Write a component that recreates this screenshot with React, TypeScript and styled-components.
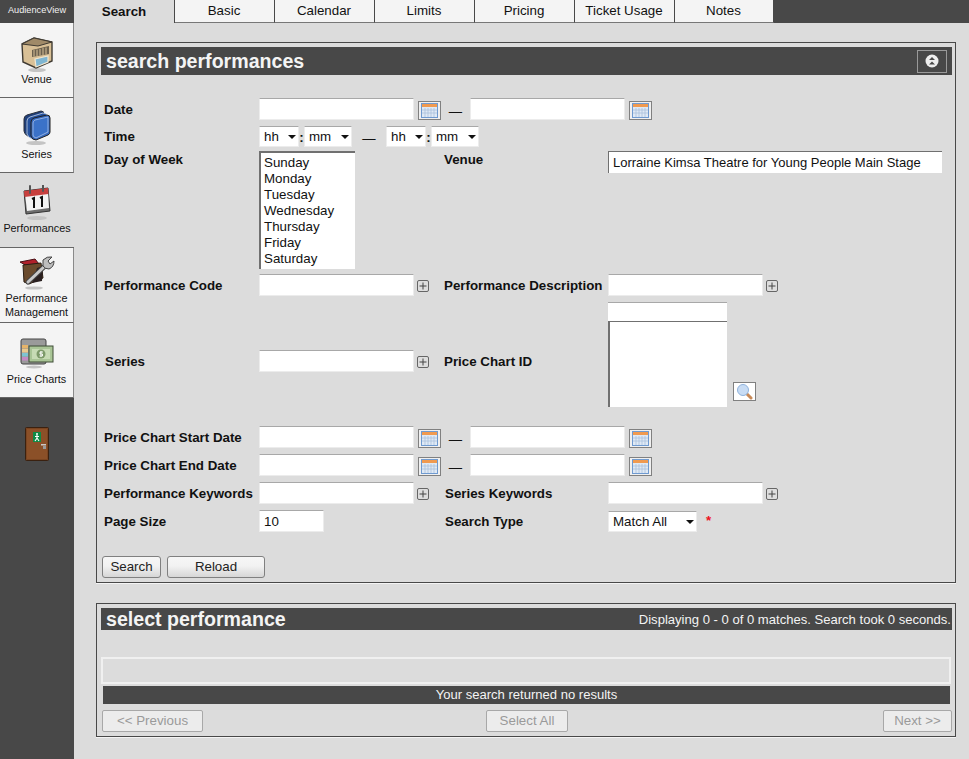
import styled, { createGlobalStyle } from "styled-components";

const GlobalStyle = createGlobalStyle`
  html, body {
    margin: 0;
    padding: 0;
    height: 100%;
    overflow: hidden;
    background: #dcdcdc;
  }
  * { box-sizing: border-box; }
  body, input, select, button {
    font-family: "Liberation Sans", Arial, sans-serif;
    font-size: 13.33px;
    color: #111;
  }
`;

const VenueIcon = () => (
  <svg width="32" height="36" viewBox="0 0 32 36">
    <ellipse cx="16" cy="33" rx="9" ry="2" fill="#c4c4c4" />
    <path d="M1 7 L13 1 L31 5 L31 24 L15 31 L2 25 Z" fill="#d9c096" stroke="#3f3a32" strokeWidth="1.4" />
    <path d="M1 7 L13 1 L31 5 L17 9 Z" fill="#a08a68" stroke="#3f3a32" strokeWidth="1" />
    <path d="M11 13 L28 9 L28 17 L11 20 Z" fill="#6b604e" />
    <path d="M13 13 V19.5 M16 12.5 V19 M19 12 V18.5 M22 11 V18 M25 10.5 V17.5" stroke="#d9c096" strokeWidth="1" />
    <path d="M14 22 L27 19 L27 25 L15 30 Z" fill="#7fb6d2" stroke="#f1e6d0" strokeWidth="1.2" />
  </svg>
);

const SeriesIcon = () => (
  <svg width="28" height="36" viewBox="0 0 28 36">
    <ellipse cx="13" cy="33" rx="10" ry="2" fill="#c4c4c4" />
    <path d="M1 9 Q1 6 4 5 L18 1 Q21 1 21 4 L21 21 L8 27 Q2 26 1 21 Z" fill="#1f3f7a" stroke="#2a2f3a" strokeWidth="1" />
    <path d="M4 11 Q4 8 7 7 L20 3 Q24 3 24 6 L24 22 L10 29 Q5 28 4 24 Z" fill="#24509c" stroke="#c6d4ea" strokeWidth="0.8" />
    <path d="M8 12 Q8 9 11 8 L24 5 Q27 5 27 8 L27 22 Q27 24 25 25 L13 30 Q9 30 8 26 Z" fill="#3467bd" stroke="#222" strokeWidth="1" />
    <path d="M10 13 Q10 11 12 10 L25 7 V22 L13 28 Q10 27 10 25 Z" fill="#3b72c8" stroke="#b9cdec" strokeWidth="0.7" />
  </svg>
);

const CalendarIcon = () => (
  <svg width="28" height="36" viewBox="0 0 28 36">
    <ellipse cx="14" cy="33" rx="10" ry="2" fill="#c4c4c4" />
    <path d="M1 6 L25 3 L27 26 L3 29 Z" fill="#6d6d6d" stroke="#333" strokeWidth="1" />
    <path d="M2 9 L25 6 L26 23 L4 26 Z" fill="#f4f4f4" />
    <path d="M1 6 L25 3 L25.4 9 L1.5 12 Z" fill="#c8403e" />
    <path d="M7 1 V8 M20 0 V6" stroke="#555" strokeWidth="2" strokeLinecap="round" />
    <path d="M9 14 L11 13 V23 M17 13 L19 12 V22" stroke="#111" strokeWidth="2" fill="none" />
  </svg>
);

const ManagementIcon = () => (
  <svg width="36" height="34" viewBox="0 0 36 34">
    <ellipse cx="15" cy="32" rx="9" ry="1.6" fill="#c4c4c4" />
    <path d="M1 6 L16 3 L20 8 L10 11 Z" fill="#b0202a" stroke="#4a1015" strokeWidth="1" />
    <path d="M4 9 L22 7 L24 22 L10 28 L5 26 Z" fill="#6a4a2c" stroke="#2a1d12" strokeWidth="1" />
    <path d="M18 12 L24 10 L23 25 L13 27 Z" fill="#2a2020" />
    <path d="M9 26 L27 9" stroke="#444" strokeWidth="5" strokeLinecap="round" />
    <path d="M9 26 L27 9" stroke="#c9c9c9" strokeWidth="3" strokeLinecap="round" />
    <path d="M24 4 Q28 0 33 1 L29 5 L31 8 L35 5 Q35 11 30 13 Q26 13 24 10 Z" fill="#bdbdbd" stroke="#444" strokeWidth="1" />
  </svg>
);

const PriceChartIcon = () => (
  <svg width="34" height="32" viewBox="0 0 34 32">
    <ellipse cx="14" cy="29" rx="8" ry="1.4" fill="#c4c4c4" />
    <rect x="1" y="1" width="25" height="25" rx="2" fill="#9a9a9a" stroke="#444" />
    <rect x="2" y="7" width="6" height="3.5" fill="#e6b46a" />
    <rect x="2" y="11" width="6" height="3.5" fill="#e9c98e" />
    <rect x="2" y="15" width="6" height="3.5" fill="#7ec4d2" />
    <rect x="2" y="19" width="6" height="3.5" fill="#c48ac4" />
    <rect x="9" y="8" width="24" height="16" fill="#a9c596" stroke="#3e4d37" />
    <rect x="12" y="11" width="18" height="10" fill="#c7dbb5" />
    <circle cx="21" cy="16" r="4.5" fill="#7d9a6a" />
    <path d="M23 14 H20 V16 H22.5 V18 H19.5 M21 13 V19" stroke="#fff" strokeWidth="0.9" fill="none" />
  </svg>
);

const DoorIcon = () => (
  <svg width="24" height="34" viewBox="0 0 24 34">
    <rect x="0.5" y="0.5" width="23" height="33" rx="1" fill="#7a4420" stroke="#3a2110" />
    <rect x="2" y="2" width="20" height="30" fill="#8b5028" />
    <rect x="8" y="5" width="8" height="10" fill="#0f8a45" />
    <circle cx="12" cy="7" r="1" fill="#fff" />
    <path d="M12 8 V11 L10 14 M12 11 L14 14 M10 9.5 H14" stroke="#fff" strokeWidth="1.1" fill="none" />
    <rect x="16" y="17" width="5" height="1.5" fill="#c8c8c8" />
    <rect x="18" y="19" width="3" height="3" fill="#9a9a9a" />
  </svg>
);

const CalendarGlyph = () => (
  <svg width="17" height="15" viewBox="0 0 17 15">
    <rect x="0.5" y="0.5" width="16" height="14" fill="#dfe9f5" stroke="#6f9ad0" />
    <rect x="1" y="1" width="15" height="3" fill="#f09a50" />
    <path d="M1 7 H16 M1 10 H16 M4 5 V14 M7 5 V14 M10 5 V14 M13 5 V14" stroke="#a9c0dc" strokeWidth="0.8" />
  </svg>
);

const MagnifierGlyph = () => (
  <svg width="17" height="17" viewBox="0 0 17 17">
    <path d="M10 10 L15 15" stroke="#c88a58" strokeWidth="3" strokeLinecap="round" />
    <circle cx="7" cy="7" r="5.5" fill="#c8dcf4" stroke="#8fb2dc" />
  </svg>
);

const CollapseGlyph = () => (
  <svg width="14" height="14" viewBox="0 0 14 14">
    <circle cx="7" cy="7" r="6.5" fill="#eeeeee" />
    <path d="M4 6 L7 3 L10 6 Z M4 10.5 L7 7.5 L10 10.5 Z" fill="#484848" />
  </svg>
);

const PlusGlyph = () => (
  <svg width="12" height="12" viewBox="0 0 12 12">
    <rect x="0.5" y="0.5" width="11" height="11" rx="1.5" fill="#dedede" stroke="#666" />
    <path d="M6 2.5 V9.5 M2.5 6 H9.5" stroke="#444" />
  </svg>
);

const navItems = [
  { label: "Venue", icon: <VenueIcon />, iconTop: 14, labelTop: 49 },
  { label: "Series", icon: <SeriesIcon />, iconTop: 12, labelTop: 49 },
  { label: "Performances", icon: <CalendarIcon />, iconTop: 12, labelTop: 48, active: true },
  { label: "Performance Management", icon: <ManagementIcon />, iconTop: 8, labelTop: 43 },
  { label: "Price Charts", icon: <PriceChartIcon />, iconTop: 15, labelTop: 49 },
];

const tabs = ["Search", "Basic", "Calendar", "Limits", "Pricing", "Ticket Usage", "Notes"];
const days = ["Sunday", "Monday", "Tuesday", "Wednesday", "Thursday", "Friday", "Saturday"];

function DateRange() {
  return (
    <Inline>
      <TextBox />
      <CalendarButton><CalendarGlyph /></CalendarButton>
      <Dash>—</Dash>
      <TextBox />
      <CalendarButton><CalendarGlyph /></CalendarButton>
    </Inline>
  );
}

function PickerField() {
  return (
    <Inline>
      <TextBox />
      <PlusButton><PlusGlyph /></PlusButton>
    </Inline>
  );
}

function Dropdown({ value, width }: { value: string; width: number }) {
  return (
    <SelectWrap $width={width}>
      <SelectBox defaultValue={value}>
        <option>{value}</option>
      </SelectBox>
    </SelectWrap>
  );
}

export default function App() {
  return (
    <Page>
      <GlobalStyle />
      <Sidebar>
        <Brand>AudienceView</Brand>
        {navItems.map((item) => (
          <NavItem key={item.label} $active={item.active}>
            <NavIcon $top={item.iconTop} $height={item.labelTop}>{item.icon}</NavIcon>
            <NavLabel>{item.label}</NavLabel>
          </NavItem>
        ))}
        <ExitDoor><DoorIcon /></ExitDoor>
      </Sidebar>
      <Main>
        <TabBar>
          {tabs.map((tab, i) => (
            <Tab key={tab} $active={i === 0}>{tab}</Tab>
          ))}
        </TabBar>
        <Panel $top={19}>
          <PanelHeader>
            <PanelTitle>search performances</PanelTitle>
            <CollapseButton><CollapseGlyph /></CollapseButton>
          </PanelHeader>
          <Form>
            <Row $height={22} $top={23}>
              <Label>Date</Label>
              <Wide><DateRange /></Wide>
            </Row>
            <Row $height={21} $top={6}>
              <Label $nudge={-1}>Time</Label>
              <Wide>
                <Inline>
                  <Dropdown value="hh" width={40} />
                  <Colon>:</Colon>
                  <Dropdown value="mm" width={48} />
                  <TimeDash>—</TimeDash>
                  <Dropdown value="hh" width={40} />
                  <Colon>:</Colon>
                  <Dropdown value="mm" width={48} />
                </Inline>
              </Wide>
            </Row>
            <Row $height={118} $top={4} $align="start">
              <Label $nudge={1}>Day of Week</Label>
              <ListBox>
                {days.map((d) => <ListOption key={d}>{d}</ListOption>)}
              </ListBox>
              <Label $nudge={1}>Venue</Label>
              <VenueBox defaultValue="Lorraine Kimsa Theatre for Young People Main Stage" />
            </Row>
            <Row $height={21} $top={5}>
              <Label>Performance Code</Label>
              <PickerField />
              <Label>Performance Description</Label>
              <PickerField />
            </Row>
            <Row $height={106} $top={6}>
              <Label $indent={1} $nudge={14}>Series</Label>
              <LoweredCell><PickerField /></LoweredCell>
              <Label $nudge={14}>Price Chart ID</Label>
              <PriceChartPicker>
                <PriceChartStack>
                  <PriceChartInput />
                  <PriceChartList />
                </PriceChartStack>
                <MagnifierButton><MagnifierGlyph /></MagnifierButton>
              </PriceChartPicker>
            </Row>
            <Row $height={22} $top={19}>
              <Label>Price Chart Start Date</Label>
              <Wide><DateRange /></Wide>
            </Row>
            <Row $height={22} $top={6}>
              <Label>Price Chart End Date</Label>
              <Wide><DateRange /></Wide>
            </Row>
            <Row $height={22} $top={6}>
              <Label>Performance Keywords</Label>
              <PickerField />
              <Label $indent={1}>Series Keywords</Label>
              <PickerField />
            </Row>
            <Row $height={22} $top={6}>
              <Label>Page Size</Label>
              <PageSizeBox defaultValue="10" />
              <Label $indent={1}>Search Type</Label>
              <Inline>
                <Dropdown value="Match All" width={89} />
                <Required>*</Required>
              </Inline>
            </Row>
          </Form>
          <ButtonRow>
            <ActionButton $width={59}>Search</ActionButton>
            <ActionButton $width={98}>Reload</ActionButton>
          </ButtonRow>
        </Panel>
        <Panel $top={20}>
          <PanelHeader $small>
            <PanelTitle>select performance</PanelTitle>
            <Matches>Displaying 0 - 0 of 0 matches. Search took 0 seconds.</Matches>
          </PanelHeader>
          <EmptyTable />
          <NoResults>Your search returned no results</NoResults>
          <Pager>
            <PagerButton $width={101} disabled>&lt;&lt; Previous</PagerButton>
            <SelectAllButton $width={82} disabled>Select All</SelectAllButton>
            <NextButton $width={69} disabled>Next &gt;&gt;</NextButton>
          </Pager>
        </Panel>
      </Main>
    </Page>
  );
}

const Page = styled.div`
  display: flex;
  width: 969px;
  height: 759px;
  overflow: hidden;
  background: #dcdcdc;
`;

const Sidebar = styled.aside`
  width: 74px;
  flex: none;
  display: flex;
  flex-direction: column;
  background: #484848;
`;

const Brand = styled.div`
  height: 23px;
  line-height: 20px;
  text-align: center;
  font-size: 9.2px;
  color: #f2f2f2;
`;

const NavItem = styled.div<{ $active?: boolean }>`
  height: 75px;
  padding-bottom: 1px;
  background: ${(p) => (p.$active ? "#dcdcdc" : "#f4f4f4")};
  border-right: ${(p) => (p.$active ? "none" : "1px solid #8a8a8a")};
  border-bottom: 1px solid #666;
`;

const NavIcon = styled.div<{ $top: number; $height: number }>`
  height: ${(p) => p.$height}px;
  padding-top: ${(p) => p.$top}px;
  display: flex;
  justify-content: center;
  overflow: hidden;
`;

const NavLabel = styled.div`
  font-size: 10.8px;
  line-height: 14px;
  text-align: center;
  color: #111;
`;

const ExitDoor = styled.div`
  margin-top: 29px;
  display: flex;
  justify-content: center;
  padding-right: 1px;
`;

const Main = styled.main`
  flex: 1;
  min-width: 0;
`;

const TabBar = styled.nav`
  display: flex;
  height: 23px;
  background: #484848;
`;

const Tab = styled.div<{ $active?: boolean }>`
  width: 100px;
  height: 23px;
  padding-right: ${(p) => (p.$active ? 0 : 1)}px;
  text-align: center;
  line-height: ${(p) => (p.$active ? 23 : 22)}px;
  font-weight: ${(p) => (p.$active ? 700 : 400)};
  background: ${(p) => (p.$active ? "#dcdcdc" : "#f4f4f4")};
  border-right: 1px solid #484848;
  border-bottom: ${(p) => (p.$active ? "none" : "1px solid #777")};

  &:first-child { width: 101px; }
  &:last-child { width: 99px; }
`;

const Panel = styled.section<{ $top: number }>`
  width: 860px;
  margin: ${(p) => p.$top}px 0 0 22px;
  padding: 4px 3px 4px 4px;
  border: 1px solid #484848;
  box-shadow: 0 1px 0 #f4f4f4;
`;

const PanelHeader = styled.header<{ $small?: boolean }>`
  height: ${(p) => (p.$small ? 22 : 28)}px;
  display: flex;
  align-items: center;
  justify-content: space-between;
  padding: 0 1px 0 5px;
  background: #484848;
  color: #f4f4f4;
`;

const PanelTitle = styled.h2`
  margin: 0;
  font-size: 19.6px;
  font-weight: 700;
  color: #f4f4f4;
`;

const CollapseButton = styled.div`
  width: 30px;
  height: 23px;
  margin-right: 4px;
  display: flex;
  align-items: center;
  justify-content: center;
  border: 1px solid #9a9a9a;
`;

const Matches = styled.span`
  font-size: 13.07px;
  color: #f4f4f4;
`;

const Form = styled.div`
  padding-left: 3px;
`;

const Row = styled.div<{ $height: number; $top: number; $align?: string }>`
  display: grid;
  grid-template-columns: 155px 185px 164px 1fr;
  align-items: ${(p) => p.$align ?? "center"};
  height: ${(p) => p.$height}px;
  margin-top: ${(p) => p.$top}px;
`;

const Label = styled.label<{ $indent?: number; $nudge?: number }>`
  font-weight: 700;
  color: #111;
  white-space: nowrap;
  padding-left: ${(p) => p.$indent ?? 0}px;
  margin-top: ${(p) => p.$nudge ?? 1}px;
`;

const Wide = styled.div`
  grid-column: 2 / -1;
`;

const LoweredCell = styled.div`
  margin-top: 14px;
`;

const Inline = styled.div`
  display: flex;
  align-items: center;
`;

const TextBox = styled.input.attrs({ type: "text" })`
  width: 155px;
  height: 22px;
  padding: 1px 4px;
  background: #fff;
  border: 1px solid #ececec;
  border-top-color: #a8a8a8;
  outline: none;
`;

const PageSizeBox = styled(TextBox)`
  width: 65px;
`;

const CalendarButton = styled.span`
  width: 23px;
  height: 19px;
  margin: 3px 0 0 4px;
  display: flex;
  align-items: center;
  justify-content: center;
  background: #f0f0f0;
  border: 1px solid #808080;
`;

const Dash = styled.span`
  width: 29px;
  text-align: center;
  margin-top: 4px;
`;

const PlusButton = styled.span`
  display: flex;
  margin: 2px 0 0 3px;
`;

const SelectWrap = styled.span<{ $width: number }>`
  position: relative;
  display: block;
  width: ${(p) => p.$width}px;
  height: 21px;

  &::after {
    content: "";
    position: absolute;
    right: 3px;
    top: 9px;
    border-left: 4px solid transparent;
    border-right: 4px solid transparent;
    border-top: 4px solid #111;
    pointer-events: none;
  }
`;

const SelectBox = styled.select`
  appearance: none;
  width: 100%;
  height: 100%;
  padding: 0 0 0 4px;
  background: #fff;
  border: 1px solid #ececec;
  border-top-color: #a8a8a8;
  border-radius: 0;
  outline: none;
`;

const Colon = styled.span`
  width: 5px;
  margin: 2px 0 0 0;
  font-weight: 700;
  text-align: center;
`;

const TimeDash = styled.span`
  width: 34px;
  text-align: center;
  margin-top: 4px;
`;

const ListBox = styled.div`
  width: 96px;
  height: 118px;
  padding: 2px 0 0 4px;
  background: #fff;
  border-top: 2px solid #707070;
  border-left: 2px solid #707070;
`;

const ListOption = styled.div`
  height: 16px;
  line-height: 16px;
  margin-left: -1px;
`;

const VenueBox = styled.input.attrs({ type: "text" })`
  width: 334px;
  height: 22px;
  padding: 1px 4px;
  font-size: 13px;
  background: #fff;
  border: none;
  border-top: 1px solid #707070;
  border-left: 1px solid #707070;
  outline: none;
`;

const PriceChartPicker = styled.div`
  display: flex;
  align-items: flex-end;
`;

const PriceChartStack = styled.div`
  display: flex;
  flex-direction: column;
  width: 119px;
  height: 105px;
`;

const PriceChartInput = styled.div`
  height: 19px;
  background: #fff;
  border-top: 1px solid #a8a8a8;
`;

const PriceChartList = styled.div`
  flex: 1;
  background: #fff;
  border-top: 1px solid #707070;
  border-left: 2px solid #707070;
`;

const MagnifierButton = styled.span`
  width: 23px;
  height: 19px;
  margin: 0 0 6px 6px;
  display: flex;
  align-items: center;
  justify-content: center;
  background: #fff;
  border: 1px solid #808080;
`;

const Required = styled.span`
  margin: 0 0 1px 9px;
  color: #ee1122;
  font-weight: 700;
`;

const ButtonRow = styled.div`
  display: flex;
  gap: 6px;
  margin: 24px 0 0 1px;
`;

const ActionButton = styled.button<{ $width: number }>`
  width: ${(p) => p.$width}px;
  height: 22px;
  padding: 0 0 2px;
  border: 1px solid #808080;
  border-radius: 3px;
  color: #222;
  background: linear-gradient(#f6f6f6, #f2f2f2 45%, #d6d6d6);
`;

const EmptyTable = styled.div`
  height: 27px;
  margin: 27px 1px 0 0;
  border: 2px solid #f0f0f0;
`;

const NoResults = styled.div`
  height: 18px;
  margin: 2px 2px 0 2px;
  line-height: 18px;
  text-align: center;
  font-size: 13.05px;
  color: #f4f4f4;
  background: #484848;
`;

const Pager = styled.div`
  display: flex;
  margin-top: 6px;
  padding-left: 1px;
`;

const PagerButton = styled.button<{ $width: number }>`
  width: ${(p) => p.$width}px;
  height: 22px;
  padding: 0 0 1px;
  border: 1px solid #a8a8a8;
  border-radius: 2px;
  color: #9a9a9a;
  background: #ececec;
`;

const SelectAllButton = styled(PagerButton)`
  margin-left: 283px;
`;

const NextButton = styled(PagerButton)`
  margin-left: auto;
`;
